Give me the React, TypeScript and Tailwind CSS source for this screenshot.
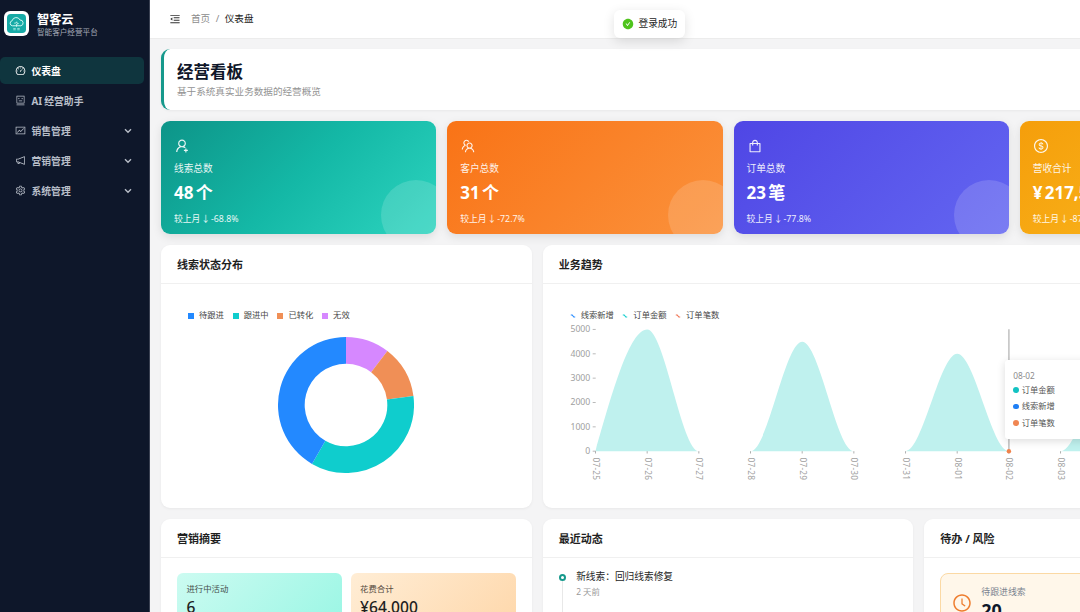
import React from "react";
import {
  AiFillCheckCircle,
  AiOutlineClockCircle,
  AiOutlineDashboard,
  AiOutlineDollarCircle,
  AiOutlineFund,
  AiOutlineMenuFold,
  AiOutlineNotification,
  AiOutlineRobot,
  AiOutlineSetting,
  AiOutlineShopping,
  AiOutlineTeam,
  AiOutlineUserAdd,
} from "react-icons/ai";

const menu = [
  { label: "仪表盘", Icon: AiOutlineDashboard, active: true, sub: false },
  { label: "AI 经营助手", Icon: AiOutlineRobot, active: false, sub: false },
  { label: "销售管理", Icon: AiOutlineFund, active: false, sub: true },
  { label: "营销管理", Icon: AiOutlineNotification, active: false, sub: true },
  { label: "系统管理", Icon: AiOutlineSetting, active: false, sub: true },
];

function Logo() {
  return (
    <div className="flex size-[25px] items-center justify-center rounded-[6px] bg-white">
      <svg viewBox="0 0 20 20" className="size-[19px]">
        <rect width="20" height="20" rx="4" fill="#16aaa6" />
        <g fill="none" stroke="#d9fbf7" strokeWidth="1">
          <path d="M5.6 12.4a2.7 2.7 0 0 1-.2-5.3 4.4 4.4 0 0 1 8.3-.8 3.1 3.1 0 0 1 .9 6.1z" />
          <path d="M7.6 9.6h1.6l1-1.4 1 2.6 1-1.2" strokeWidth=".8" />
          <path d="M10 10.5v3" strokeWidth=".8" />
        </g>
        <path d="M6.6 15.2h2.6M6.6 16.6h2.6M10.8 15.2h2.6M10.8 16.6h2.6" stroke="#b5f0ea" strokeWidth=".8" />
      </svg>
    </div>
  );
}

function Sidebar() {
  return (
    <aside className="h-full w-[150px] shrink-0 border-r border-[#3a4152] bg-[#0e172a]">
      <div className="flex h-[57px] items-start gap-[8px] pt-[11px] pl-[4px]">
        <Logo />
        <div>
          <div className="h-[15px] text-[12.2px] leading-[17px] font-bold text-white">智客云</div>
          <div className="text-[7.6px] leading-[13px] text-[#a3a9b5]">智能客户经营平台</div>
        </div>
      </div>
      <nav className="flex flex-col gap-[3px] pr-[5px]">
        {menu.map(({ label, Icon, active, sub }) => (
          <div
            key={label}
            className={
              active
                ? "flex h-[27px] items-center rounded-[5px] bg-[#0f353e] pl-[15px] font-bold text-white"
                : "flex h-[27px] items-center pl-[15px] font-bold text-[#b9bfc9]"
            }
          >
            <Icon className="size-[11px]" />
            <span className="ml-[5.5px] flex-1 pt-[3px] text-[9.8px] leading-[14px] whitespace-nowrap [word-spacing:-0.4px]">{label}</span>
            {sub && (
              <svg viewBox="0 0 8 8" className="mr-[12px] size-[8px]" fill="none" stroke="currentColor" strokeWidth="1.4">
                <path d="M1 2.3 4 5.2 7 2.3" />
              </svg>
            )}
          </div>
        ))}
      </nav>
    </aside>
  );
}

const stats = [
  { label: "线索总数", value: "48 个", change: "-68.8%", Icon: AiOutlineUserAdd, bg: "bg-[linear-gradient(135deg,#0d9488_0%,#14b8a6_50%,#2dd4bf_100%)]" },
  { label: "客户总数", value: "31 个", change: "-72.7%", Icon: AiOutlineTeam, bg: "bg-[linear-gradient(135deg,#f97316,#fb923c)]" },
  { label: "订单总数", value: "23 笔", change: "-77.8%", Icon: AiOutlineShopping, bg: "bg-[linear-gradient(135deg,#4f46e5,#6366f1)]" },
  { label: "营收合计", value: "¥ 217,500", change: "-87.2%", Icon: AiOutlineDollarCircle, bg: "bg-[linear-gradient(135deg,#f59e0b,#fbbf24)]" },
];

function Panel({ title, className = "", children }: { title: string; className?: string; children: React.ReactNode }) {
  return (
    <section className={"relative rounded-[9px] bg-white shadow-[0_1px_3px_rgba(0,0,0,0.05)] " + className}>
      <h2 className="flex h-[39px] items-center border-b border-[#f0f0f0] px-[16px] pt-[2px] text-[11px] font-bold text-[#1f1f1f]">{title}</h2>
      {children}
    </section>
  );
}

const slices = [
  { color: "#d688ff", count: 5 },
  { color: "#f08f56", count: 6 },
  { color: "#0fcdcd", count: 17 },
  { color: "#2389ff", count: 20 },
];

function Donut() {
  const cx = 68;
  const outer = 68;
  const inner = 41.3;
  let sum = 0;
  const pt = (r: number, n: number) => {
    const a = (n / 48) * Math.PI * 2;
    return `${cx + r * Math.sin(a)} ${cx - r * Math.cos(a)}`;
  };
  return (
    <svg viewBox="0 0 136 136" className="ml-[117px] size-[136px]">
      {slices.map(({ color, count }) => {
        const a = sum;
        sum += count;
        return (
          <path
            key={color}
            fill={color}
            d={`M${pt(outer, a)}A${outer} ${outer} 0 0 1 ${pt(outer, sum)}L${pt(inner, sum)}A${inner} ${inner} 0 0 0 ${pt(inner, a)}Z`}
          />
        );
      })}
    </svg>
  );
}

const pieLegend = [
  { label: "待跟进", bg: "bg-[#2389ff]" },
  { label: "跟进中", bg: "bg-[#0fcdcd]" },
  { label: "已转化", bg: "bg-[#f08f56]" },
  { label: "无效", bg: "bg-[#d688ff]" },
];

const lineLegend = [
  { label: "线索新增", color: "#2389ff" },
  { label: "订单金额", color: "#0fcdcd" },
  { label: "订单笔数", color: "#f0714e" },
];

const days = ["07-25", "07-26", "07-27", "07-28", "07-29", "07-30", "07-31", "08-01", "08-02", "08-03"];
const X0 = 52.5;
const STEP = 51.67;
const BASE = 129.2;
const UNIT = 24.35;

function hump(start: number, value: number, first = false) {
  const x = X0 + start * STEP;
  const top = BASE - (value / 1000) * UNIT;
  const t = STEP / 3;
  const c1 = first ? BASE - (BASE - top) / 2 : BASE;
  return `M${x} ${BASE}C${x + t} ${c1} ${x + 2 * t} ${top} ${x + STEP} ${top}S${x + 5 * t} ${BASE} ${x + 6 * t} ${BASE}Z`;
}

function Trend() {
  return (
    <svg viewBox="0 0 752 185" className="block h-[185px] w-[752px]" fontSize="8.7">
      <g fill="#bff1ee">
        <path d={hump(0, 5000, true)} />
        <path d={hump(3, 4500)} />
        <path d={hump(6, 4000)} />
        <path d={hump(9, 3500)} />
      </g>
      {[0, 1, 2, 3, 4, 5].map((n) => (
        <g key={n}>
          <text x="47.3" y={BASE - n * UNIT + 2.8} textAnchor="end" fill="#a0a0a0">
            {n * 1000}
          </text>
          <path d={`M49.7 ${BASE - n * UNIT}h3`} stroke="#a8a8a8" strokeWidth=".8" />
        </g>
      ))}
      {days.map((d, i) => (
        <g key={d}>
          <path d={`M${X0 + i * STEP} ${BASE}v2.3`} stroke="#9a9a9a" strokeWidth=".8" />
          <text transform={`translate(${X0 + i * STEP - 2.4} ${BASE + 6.3}) rotate(90)`} fill="#a0a0a0" fontSize="8.3" textLength="22.5">
            {d}
          </text>
        </g>
      ))}
      <path d="M465.9 7.3V129" stroke="#c4c4c4" strokeWidth="1.6" />
      <circle cx="465.9" cy="129.2" r="2.2" fill="#f0824a" />
    </svg>
  );
}

const tips = [
  { label: "订单金额", bg: "bg-[#13c2c2]" },
  { label: "线索新增", bg: "bg-[#1f7ff5]" },
  { label: "订单笔数", bg: "bg-[#f08652]" },
];

export default function App() {
  return (
    <div className="relative flex h-[612px] w-[1080px] overflow-hidden bg-[#f4f4f5] font-['Noto_Sans','Noto_Sans_CJK_SC',sans-serif]">
      <Sidebar />
      <div className="min-w-0 flex-1 overflow-hidden">
        <header className="flex h-[39px] items-center border-b border-[#ececec] bg-white pl-[18.5px] text-[9.6px]">
          <AiOutlineMenuFold className="size-[12px] text-[#333]" />
          <div className="flex gap-[5.5px] pl-[10.5px]">
            <span className="text-[#8c8c8c]">首页</span>
            <span className="text-[#8c8c8c]">/</span>
            <span className="text-[#222]">仪表盘</span>
          </div>
        </header>

        <main className="flex w-[1156px] flex-col gap-[11px] px-[11px] pt-[10px]">
          <section className="h-[61px] rounded-[9px] border-l-[3px] border-[#16998c] bg-white pt-[11px] pl-[13px] shadow-[0_1px_3px_rgba(0,0,0,0.05)]">
            <h1 className="text-[16.5px] leading-[24px] font-bold text-[#0f172a]">经营看板</h1>
            <p className="text-[9.6px] leading-[15px] text-[#939393]">基于系统真实业务数据的经营概览</p>
          </section>

          <div className="grid grid-cols-4 gap-[11px]">
            {stats.map(({ label, value, change, Icon, bg }) => (
              <article key={label} className={"relative h-[113px] overflow-hidden rounded-[9px] pt-[17px] pl-[13px] text-white shadow-[0_3px_10px_rgba(0,0,0,0.1)] " + bg}>
                <Icon className="size-[16px] opacity-90" />
                <div className="mt-[6.5px] text-[9.7px] leading-[15px] opacity-90">{label}</div>
                <div className="mt-[6.5px] text-[17px] leading-[22px] font-bold whitespace-nowrap [word-spacing:-2.2px]">{value}</div>
                <div className="mt-[7.5px] text-[8.8px] leading-[15px] whitespace-nowrap opacity-90">
                  较上月 <span className="inline-block w-[6px] -indent-[1.5px]">↓</span> {change}
                </div>
                <div className="absolute right-[-15px] bottom-[-16px] size-[70px] rounded-full bg-white/15" />
              </article>
            ))}
          </div>

          <div className="grid grid-cols-3 gap-[11px]">
            <Panel title="线索状态分布" className="h-[263px]">
              <div className="flex gap-[8.8px] pt-[24px] pl-[27px]">
                {pieLegend.map(({ label, bg }) => (
                  <span key={label} className="flex h-[14px] items-center gap-[5px] text-[8.3px] text-[#484848]">
                    <i className={"mt-px size-[6px] " + bg} />
                    {label}
                  </span>
                ))}
              </div>
              <div className="pt-[15px]">
                <Donut />
              </div>
            </Panel>

            <Panel title="业务趋势" className="col-span-2 h-[263px]">
              <div className="flex gap-[8.5px] pt-[24px] pl-[27px]">
                {lineLegend.map(({ label, color }) => (
                  <span key={label} className="flex h-[14px] items-center gap-[5px] text-[8.3px] text-[#484848]">
                    <svg viewBox="0 0 6 6" className="mt-px size-[6px]" fill="none" stroke={color} strokeWidth="1.1">
                      <path d="M.8 2h1.4l1.6 2h1.4" />
                    </svg>
                    {label}
                  </span>
                ))}
              </div>
              <Trend />
              <div className="absolute top-[115px] left-[462px] flex h-[79px] w-[92px] flex-col rounded-[3px] bg-white pt-[9px] pl-[8.5px] text-[8.3px] shadow-[0_2px_9px_rgba(0,0,0,0.14)]">
                <span className="h-[13px] leading-[13px] text-[#8c8c8c]">08-02</span>
                {tips.map(({ label, bg }) => (
                  <span key={label} className="flex h-[16.4px] items-center gap-[3px] text-[#555]">
                    <i className={"size-[5.5px] rounded-full " + bg} />
                    {label}
                  </span>
                ))}
              </div>
            </Panel>
          </div>

          <div className="grid grid-cols-3 gap-[11px]">
            <Panel title="营销摘要" className="h-[200px]">
              <div className="grid grid-cols-2 gap-[8.5px] px-[16px] pt-[15px]">
                <div className="h-[60px] rounded-[6px] bg-[linear-gradient(135deg,#ccfbf1,#99f6e4)] pt-[9px] pl-[9.5px]">
                  <div className="text-[8.4px] leading-[14px] text-[#464f4d]">进行中活动</div>
                  <div className="text-[15.6px] leading-[23px] font-medium text-[#1f1f1f]">6</div>
                </div>
                <div className="h-[60px] rounded-[6px] bg-[linear-gradient(135deg,#ffedd5,#fed7aa)] pt-[9px] pl-[9.5px]">
                  <div className="text-[8.4px] leading-[14px] text-[#554b3f]">花费合计</div>
                  <div className="text-[15.6px] leading-[23px] font-medium text-[#1f1f1f]">¥64,000</div>
                </div>
              </div>
            </Panel>

            <Panel title="最近动态" className="h-[200px]">
              <div className="flex gap-[10px] pt-[10px] pl-[16px]">
                <div className="flex flex-col items-center pt-[5.5px]">
                  <span className="size-[7px] rounded-full border-2 border-[#16998c] bg-white" />
                  <span className="h-[60px] w-px bg-[#e8e8e8]" />
                </div>
                <div className="pl-[0.5px]">
                  <div className="text-[9.7px] leading-[18px] text-[#262626]">新线索：回归线索修复</div>
                  <div className="text-[8.4px] leading-[12px] text-[#999]">2 天前</div>
                </div>
              </div>
            </Panel>

            <Panel title="待办 / 风险" className="h-[200px]">
              <div className="mx-[16px] mt-[15px] flex h-[60px] items-center gap-[9.5px] rounded-[8px] border border-[#fbd9a4] bg-[#fff7ea] pl-[10.5px]">
                <AiOutlineClockCircle className="size-[20px] text-[#ee7d2e]" />
                <div className="pb-px">
                  <div className="text-[8.9px] leading-[15px] text-[#7b8490]">待跟进线索</div>
                  <div className="text-[18px] leading-[22px] font-bold text-[#0f172a]">20</div>
                </div>
              </div>
            </Panel>
          </div>
        </main>
      </div>

      <div className="absolute top-[10px] left-[613.5px] flex h-[27.5px] w-[71.5px] items-center gap-[5px] rounded-[6px] bg-white pl-[8px] text-[9.7px] text-[#262626] shadow-[0_3px_12px_rgba(0,0,0,0.12)]">
        <AiFillCheckCircle className="size-[12px] text-[#4fc41c]" />
        <span className="pt-px">登录成功</span>
      </div>
    </div>
  );
}
